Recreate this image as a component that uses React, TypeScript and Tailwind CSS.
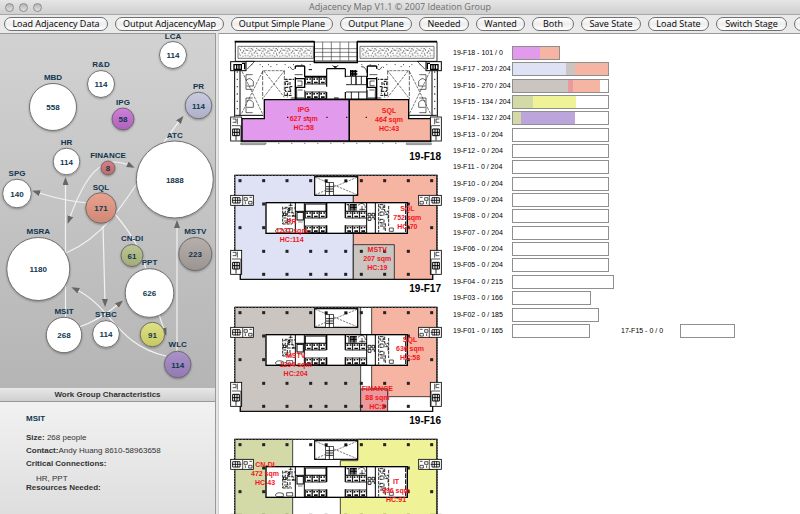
import React from "react";

type GroupNode = { name: string; size: number; x: number; y: number; r: number; labelY?: number; fill?: string };
type Room = { points: string; fill: string; lines: string[]; x: number; y: number };
type Floor = { name: string; rooms: Room[] };
type Bar = { label: string; width: number; parts?: [string, number][] };

const MAGENTA = "#e19aec";
const SALMON = "#f6b5a2";
const LAVENDER = "#dfe1f4";
const STONE = "#cbc5c1";
const GREEN = "#d3daa8";
const YELLOW = "#f0f297";
const PURPLE = "#bca5da";
const ROSE = "#ea9a9c";

const actions: [string, string][] = [
  ["Load Adjacency Data", "w-[104px]"],
  ["Output AdjacencyMap", "w-[109px]"],
  ["Output Simple Plane", "w-[102px]"],
  ["Output Plane", "w-[72px]"],
  ["Needed", "w-[50px]"],
  ["Wanted", "w-[49px]"],
  ["Both", "w-[42px]"],
  ["Save State", "w-[60px]"],
  ["Load State", "w-[61px]"],
  ["Switch Stage", "w-[71px]"],
];

const nodes: GroupNode[] = [
  { name: "LCA", size: 114, x: 173, y: 55, r: 13.5, labelY: 36 },
  { name: "R&D", size: 114, x: 101, y: 84, r: 13.5, labelY: 64 },
  { name: "MBD", size: 558, x: 53, y: 107, r: 23.5, labelY: 77 },
  { name: "IPG", size: 58, x: 123, y: 119, r: 11, labelY: 102, fill: "url(#n-magenta)" },
  { name: "PR", size: 114, x: 198.5, y: 105.5, r: 13.3, labelY: 86, fill: "url(#n-lavender)" },
  { name: "ATC", size: 1888, x: 174.8, y: 179.5, r: 38.5, labelY: 135 },
  { name: "HR", size: 114, x: 66.5, y: 161.5, r: 13.3, labelY: 142 },
  { name: "FINANCE", size: 8, x: 108, y: 168, r: 7, labelY: 155, fill: "url(#n-red)" },
  { name: "SPG", size: 140, x: 17, y: 193.5, r: 14.3, labelY: 173 },
  { name: "SQL", size: 171, x: 101, y: 208, r: 15.3, labelY: 187, fill: "url(#n-salmon)" },
  { name: "MSRA", size: 1180, x: 38.3, y: 269, r: 31.5, labelY: 231 },
  { name: "CN-DI", size: 61, x: 132, y: 255.5, r: 11, labelY: 238, fill: "url(#n-green)" },
  { name: "MSTV", size: 223, x: 195.3, y: 254, r: 16.5, labelY: 231, fill: "url(#n-stone)" },
  { name: "PPT", size: 626, x: 149.5, y: 293, r: 24.3, labelY: 262 },
  { name: "MSIT", size: 268, x: 64, y: 335, r: 17.7, labelY: 311 },
  { name: "STBC", size: 114, x: 106, y: 334, r: 13.4, labelY: 314 },
  { name: "IT", size: 91, x: 152.4, y: 334.5, r: 12.2, fill: "url(#n-yellow)" },
  { name: "WLC", size: 114, x: 177.7, y: 364.5, r: 13.3, labelY: 344, fill: "url(#n-purple)" },
];

const links = [
  "M88 203Q64 201 36 192",
  "M65.5 318V181",
  "M104 165Q86 172 69 220",
  "M104 163Q118 160 131 166",
  "M66 253C120 230 140 170 181 119",
  "M103 226L105 303",
  "M115 214C152 258 142 270 165 332",
  "M166 356C116 345 112 306 75 289",
  "M79 327Q98 321 120 303",
  "M177 352V224",
];

const gradients: [string, string, string][] = [
  ["n-magenta", "#d17fdc", "#ad62b8"],
  ["n-lavender", "#c9cbe0", "#adafc8"],
  ["n-red", "#d87f80", "#c06b6b"],
  ["n-salmon", "#e8a28f", "#cf8875"],
  ["n-green", "#bcc594", "#a2ac77"],
  ["n-stone", "#b7afab", "#9b9490"],
  ["n-yellow", "#dfe183", "#c6c863"],
  ["n-purple", "#ab92cb", "#9279b2"],
];

function AdjacencyGraph() {
  return (
    <svg
      width="215"
      height="354"
      viewBox="0 34 215 354"
      className="block shrink-0 text-[8px] font-bold"
      role="img"
      aria-label="Adjacency map"
    >
      <defs>
        <marker id="arrow" viewBox="0 0 8 6" refX="4" refY="3" markerWidth="8" markerHeight="6" markerUnits="userSpaceOnUse" orient="auto">
          <path d="M0 0L8 3L0 6Z" fill="#666" />
        </marker>
        <filter id="shade" x="-20%" y="-20%" width="140%" height="150%">
          <feDropShadow dx="0" dy="1" stdDeviation="1" floodColor="#000" floodOpacity="0.3" />
        </filter>
        {gradients.map(([id, a, b]) => (
          <linearGradient key={id} id={id} x1="0" y1="0" x2="0" y2="1">
            <stop offset="0" stopColor={a} />
            <stop offset="1" stopColor={b} />
          </linearGradient>
        ))}
      </defs>
      <g fill="none" stroke="#f2f2f2" strokeWidth="1.2">
        {links.map((d) => (
          <path key={d} d={d} markerEnd="url(#arrow)" />
        ))}
      </g>
      {nodes.map((n) => (
        <g key={n.name} textAnchor="middle" fill="#10364f">
          <circle cx={n.x} cy={n.y} r={n.r} fill={n.fill ?? "#fff"} stroke="#666" strokeWidth="0.9" filter="url(#shade)" />
          <text x={n.x} y={n.y + 3}>{n.size}</text>
          {n.labelY && <text x={n.x} y={n.labelY + 3}>{n.name}</text>}
        </g>
      ))}
    </svg>
  );
}

function Lifts({ x, y }: { x: number; y: number }) {
  return (
    <g>
      {[0, 21, 42].map((dx) => (
        <g key={dx} transform={`translate(${x + dx} ${y})`}>
          <rect width="20" height="20" fill="#fff" stroke="#000" strokeWidth="2.5" />
          <path d="M3 3h5v5h-5zM12 3h5v4h-5zM5 13h11v5h-11z" fill="#111" />
        </g>
      ))}
    </g>
  );
}

// Toilets and risers on both sides of the lift banks.
function Services() {
  return (
    <g fill="none" stroke="#000">
      <path d="M182 122v52M188 124h14v12h-14M206 112v14h14M196 140h18v10h-18zM184 156h12v14h-12M204 156v16M182 174h28" strokeWidth="2.5" strokeDasharray="9 3" />
      <path d="M184 128h10M190 144l8 8M210 128v14M186 165h14M200 118h12M160 195c4-8 14-8 24-4v9h-20zM194 188h18v10h-18z" strokeWidth="2" />
      <path d="M210 150h12M184 141h8v8h-8zM198 128h6v5h-6z" strokeWidth="3" />
      <path d="M220 110v92M247 110v92M220 136h27" strokeWidth="3" />
      <rect x="225" y="139" width="19" height="23" strokeWidth="3" />
      <path d="M228 168h14" strokeWidth="1.5" />
      <path d="M250 114h62v22h-62z" strokeWidth="3" />
      <path d="M314 110v46M314 178v24M370 110v46M370 178v24" strokeWidth="4" />
      <path d="M370 136h64M434 110v92M460 110v92" strokeWidth="3" />
      <path d="M374 116h7v18M386 114v20M390 114v20M394 114v20M398 114v20M402 114v20M384 116h20M384 124h20" strokeWidth="3" />
      <path d="M408 118c10-10 22-6 22 8M412 130h18M420 120v14" strokeWidth="2" />
      <path d="M438 142h9v8h-9zM450 142h8v8h-8zM438 154h9v9h-9zM450 155h7v7" strokeWidth="2.5" />
      <path d="M470 114v86M474 116h10v10h-10zM488 116v20h10M474 138h12v10h-12zM490 146h8v12M474 160h12v10h-12zM474 180h12v12M490 172v24M500 120v60" strokeWidth="2.5" strokeDasharray="10 3" />
      <path d="M502 186h12v10h-12zM478 130h8M490 138l6 6M476 174h14" strokeWidth="2" />
    </g>
  );
}

function Core() {
  return (
    <g>
      <rect x="132" y="110" width="424" height="92" fill="#fff" stroke="#000" strokeWidth="4" />
      <Services />
      <Lifts x={250} y={136} />
      <Lifts x={250} y={180} />
      <Lifts x={371} y={136} />
      <Lifts x={371} y={180} />
      <path d="M551 112v88" stroke="#000" strokeWidth="3" strokeDasharray="14 4" />
    </g>
  );
}

function SideStairs({ y }: { y: number }) {
  return (
    <g fill="none" stroke="#000">
      {[0, 1].map((side) => (
        <g key={side} transform={side ? `translate(684 ${y}) scale(-1 1)` : `translate(0 ${y})`}>
          <rect x="26" y="0" width="33" height="72" fill="#fff" strokeWidth="2.5" />
          <path d="M32 6h10v10h-10M46 4v18M30 26h26" strokeWidth="2" />
          <path d="M32 36h20v20h-20zM38 36v20M45 36v20M32 46h20" strokeWidth="3" />
          <path d="M42 56v14M57 26v46" strokeWidth="2.5" />
        </g>
      ))}
    </g>
  );
}

const columnRows: [number, number[]][] = [
  [44, [54, 125, 195, 266, 312, 371, 418, 488, 559, 629]],
  [114, [125, 195, 266, 418, 488, 559, 629]],
  [185, [54, 125, 559, 629]],
  [256, [125, 195, 266, 312, 371, 418, 488, 559]],
  [325, [125, 195, 266, 312, 371, 418, 488, 559]],
];

function TypicalFloor({ rooms }: { rooms: Room[] }) {
  return (
    <g>
      <path d="M38 28H645V255H630V341H55V255H38Z" fill="#fff" />
      {rooms.map((room) => (
        <polygon key={room.lines[0]} points={room.points} fill={room.fill} stroke="#222" strokeWidth="2.5" />
      ))}
      <path d="M38 28H645V255M38 28V255M55 322V340H632V322" fill="none" stroke="#111" strokeWidth="4" />
      <path d="M38 27H645" stroke="#999" strokeWidth="3" strokeDasharray="5 5" />
      <path d="M38 32V250M646 32V250" stroke="#888" strokeWidth="3" strokeDasharray="4 4" />
      {columnRows.map(([y, xs]) =>
        xs.map((x) => <rect key={`${x}-${y}`} x={x - 4.5} y={y - 4.5} width="9" height="9" fill="#222" />),
      )}
      <g fill="none" stroke="#000">
        <rect x="278" y="32" width="129" height="56" fill="#fff" strokeWidth="3.5" />
        <path d="M280 34L405 86M405 34L280 86" strokeWidth="1.5" strokeDasharray="7 3" />
        <rect x="310" y="50" width="25" height="38" fill="#fff" strokeWidth="2" />
        <path d="M322 50v38M312 62h22M312 69h22M312 76h22" strokeWidth="2.5" />
      </g>
      <g fill="#111">
        <rect x="308" y="40" width="9" height="9" />
        <rect x="367" y="40" width="9" height="9" />
      </g>
      {[0, 1].map((side) => (
        <g key={side} transform={side ? "translate(684 0) scale(-1 1)" : undefined} fill="none" stroke="#000">
          <rect x="26" y="88" width="68" height="30" fill="#fff" strokeWidth="2.5" />
          <path d="M32 95h22v16h-22zM40 94v18M47 94v18M30 103h28" strokeWidth="2.5" />
          <path d="M62 90v28M66 95h10v8h-10zM82 94h8M70 106v8M80 106h10v8h-10z" strokeWidth="2" />
        </g>
      ))}
      <SideStairs y={253} />
      <Core />
    </g>
  );
}

function TopFloor({ rooms }: { rooms: Room[] }) {
  return (
    <g>
      <defs>
        <pattern id="gravel" width="37" height="31" patternUnits="userSpaceOnUse">
          <path
            d="M2 3h3M9 6h3M16 2h3M24 5h3M32 3h3M5 11h3M13 13h3M20 10h3M29 12h3M1 18h3M10 20h3M17 17h3M26 20h3M33 17h3M6 26h3M14 28h3M22 25h3M30 27h3"
            stroke="#222"
            strokeWidth="3"
          />
        </pattern>
      </defs>
      <g fill="none" stroke="#000">
        <path d="M277 82H40V23H277ZM405 82H645V23H405Z" fill="#fff" strokeWidth="2.5" />
        <path d="M38 23H277M405 23H645" strokeWidth="5" />
        <path d="M48 37H274V73H48ZM414 37H636V73H414Z" strokeWidth="2" stroke="#333" />
        <path d="M52 41H270V70H52ZM418 41H632V70H418Z" fill="url(#gravel)" stroke="none" />
        <path d="M277 24H405M277 44H405M277 55H405M277 68H405M277 80H405M302 24V80M328 24V80M354 24V80M380 24V80" stroke="#333" strokeWidth="1.8" />
        <path d="M275 85H408" strokeWidth="5" />
        <path d="M277 22V84M406 22V84" strokeWidth="3.5" />
        {[0, 1].map((side) => (
          <g key={side} transform={side ? "translate(684 0) scale(-1 1)" : undefined}>
            <rect x="26" y="83" width="46" height="27" fill="#fff" strokeWidth="3" />
            <path d="M36 92h22v14h-22zM44 90v16M51 90v16M60 88h8v18" strokeWidth="4" />
            <path d="M72 82H98L75 106" strokeWidth="2" />
            <path d="M38 110V248M54 110V244M40 244H124" strokeWidth="3" />
            <path d="M46 112V245" strokeWidth="4" stroke="#555" strokeDasharray="4 18" />
            <path d="M60 112L122 240M122 112L58 240M125 110L187 110L125 190M125 110L187 190" stroke="#222" strokeWidth="1.8" strokeDasharray="9 3" />
            <path d="M122 110V196M187 110V190" strokeWidth="1.8" strokeDasharray="12 4" />
            <path d="M92 122H72V166H92M92 192H72V236H92" strokeWidth="1.8" />
            <path d="M74 138q10-10 20 4v14h-20M74 202q10-10 20 4v14h-20" strokeWidth="1.8" />
            <path d="M88 92h180M120 98h40M198 100h20" strokeWidth="3" stroke="#444" strokeDasharray="3 22" />
            <path d="M188 136h28M190 142h8v10h-8zM204 144v14h10M190 160h14v12h-14zM206 166v14M188 184h24M196 176v14" strokeWidth="3" strokeDasharray="9 3" />
            <path d="M220 96v8M220 130v66M220 96h28M248 96v34M220 134h28v26h-28z" strokeWidth="4" />
            <path d="M226 141h14v14h-14M228 168h14M248 168v28M218 122h24M204 98q8 14 14 6" strokeWidth="2" />
            <path d="M224 160v36M206 192h40" strokeWidth="2.5" />
          </g>
        ))}
        <path d="M314 104V158M314 174V194M370 104V130M370 174V194M314 104H370" strokeWidth="3.5" />
        <path d="M332 94l8 8l8-8M336 98h8M336 192h14M260 107h10" strokeWidth="3" />
        <path d="M370 127H434V152H402V127V152H372M388 127V150M418 127V150M372 174H434M388 174V196M410 174V196" strokeWidth="2.5" />
        <path d="M384 112h22M386 108v18M391 108v18M396 108v18M401 108v18M384 120h22" strokeWidth="4" />
        <path d="M418 98c10 0 16 8 16 18M434 127v68" strokeWidth="2.5" />
        <path d="M248 127H314M220 195H462" strokeWidth="3.5" />
      </g>
      <Lifts x={250} y={130} />
      <Lifts x={250} y={174} />
      {rooms.map((room) => (
        <polygon key={room.lines[0]} points={room.points} fill={room.fill} stroke="#000" strokeWidth="4" />
      ))}
      <path d="M195 250H500" stroke="#222" strokeWidth="4" strokeDasharray="4 55" />
      <SideStairs y={249} />
      <path d="M56 323H628" stroke="#111" strokeWidth="3" />
      <path d="M130 328H553" stroke="#555" strokeWidth="3" strokeDasharray="3 36" />
      <path d="M56 327H130V332H56ZM553 327H628V332H553Z" fill="#bbb" stroke="#555" strokeWidth="1.5" />
    </g>
  );
}

const floors: Floor[] = [
  {
    name: "19-F18",
    rooms: [
      { points: "127,197 382,197 382,321 60,321 60,254 127,254", fill: MAGENTA, lines: ["IPG", "627 sqm", "HC:58"], x: 245, y: 226 },
      { points: "382,197 560,197 560,254 626,254 626,321 382,321", fill: SALMON, lines: ["SQL", "464 sqm", "HC:43"], x: 501, y: 228 },
    ],
  },
  {
    name: "19-F17",
    rooms: [
      { points: "38,28 394,28 394,341 55,341 55,255 38,255", fill: LAVENDER, lines: ["PR", "1221 sqm", "HC:114"], x: 209, y: 167 },
      { points: "394,28 645,28 645,255 632,255 632,341 394,341", fill: SALMON, lines: ["SQL", "752 sqm", "HC:70"], x: 556, y: 128 },
      { points: "394,236 517,236 517,341 394,341", fill: STONE, lines: ["MSTV", "207 sqm", "HC:19"], x: 466, y: 249 },
    ],
  },
  {
    name: "19-F16",
    rooms: [
      { points: "38,28 416,28 416,341 55,341 55,255 38,255", fill: STONE, lines: ["MSTV", "1294 sqm", "HC:204"], x: 221, y: 171 },
      { points: "449,28 645,28 645,296 497,296 497,273 449,273", fill: SALMON, lines: ["SQL", "636 sqm", "HC:58"], x: 564, y: 123 },
      { points: "416,273 497,273 497,341 416,341", fill: ROSE, lines: ["FINANCE", "88 sqm", "HC:8"], x: 466, y: 270 },
    ],
  },
  {
    name: "19-F15",
    rooms: [
      { points: "38,28 212,28 212,341 55,341 55,255 38,255", fill: GREEN, lines: ["CN-DI", "472 sqm", "HC:43"], x: 129, y: 103 },
      { points: "407,28 645,28 645,255 632,255 632,341 355,341 355,92 407,92", fill: YELLOW, lines: ["IT", "996 sqm", "HC:91"], x: 522, y: 155 },
    ],
  },
];

function FloorPlan({ floor, top }: { floor: Floor; top: boolean }) {
  return (
    <figure className="shrink-0">
      <svg width="228" height="114" viewBox="0 0 684 342" className="block" role="img" aria-label={`Plan of ${floor.name}`}>
        {top ? <TopFloor rooms={floor.rooms} /> : <TypicalFloor rooms={floor.rooms} />}
        <g className="text-[21px] font-bold" fill="#f5141c" textAnchor="middle">
          {floor.rooms.map((room) =>
            room.lines.map((line, i) => (
              <text key={line} x={room.x} y={room.y + 8 + i * 27}>{line}</text>
            )),
          )}
        </g>
      </svg>
      <figcaption className="pr-[9px] text-right text-[10px] leading-[18px] font-bold text-black">{floor.name}</figcaption>
    </figure>
  );
}

const bars: Bar[] = [
  { label: "19-F18 - 101 / 0", width: 48, parts: [[MAGENTA, 27], [SALMON, 19]] },
  { label: "19-F17 - 203 / 204", width: 97, parts: [[LAVENDER, 53], [STONE, 9], [SALMON, 33]] },
  { label: "19-F16 - 270 / 204", width: 97, parts: [[STONE, 55], [ROSE, 5], [SALMON, 27]] },
  { label: "19-F15 - 134 / 204", width: 97, parts: [[GREEN, 20], [YELLOW, 43]] },
  { label: "19-F14 - 132 / 204", width: 97, parts: [[GREEN, 8], [PURPLE, 54]] },
  ...["13", "12", "11", "10", "09", "08", "07", "06", "05"].map((n) => ({ label: `19-F${n} - 0 / 204`, width: 97 })),
  { label: "19-F04 - 0 / 215", width: 102 },
  { label: "19-F03 - 0 / 166", width: 79 },
  { label: "19-F02 - 0 / 185", width: 87 },
  { label: "19-F01 - 0 / 165", width: 78 },
];

function CapacityBar({ bar }: { bar: Bar }) {
  return (
    <li className="flex items-center">
      <span className="w-[59px] shrink-0 text-[7px] leading-[14px] whitespace-nowrap text-black">{bar.label}</span>
      <span className="flex h-[14px] shrink-0 border border-[#8f8f8f] bg-white" style={{ width: bar.width }}>
        {bar.parts?.map(([color, width], i) => (
          <span key={i} className="h-full shrink-0" style={{ width, backgroundColor: color }} />
        ))}
      </span>
    </li>
  );
}

export default function App() {
  return (
    <div className="flex h-screen flex-col overflow-hidden bg-[#e6e6e6] font-['Liberation_Sans',Arial,sans-serif]">
      <header className="relative flex h-[15px] shrink-0 items-center justify-center border-b border-[#a8a8a8] bg-linear-to-b from-[#e6e6e6] to-[#cfcfcf]">
        <div className="absolute left-[5px] flex gap-[5px]">
          {["Close", "Minimise", "Zoom"].map((label) => (
            <button
              key={label}
              aria-label={label}
              className="size-[9px] rounded-full border border-[#8d8d8d] bg-linear-to-b from-[#b5b5b5] to-[#e2e2e2]"
            />
          ))}
        </div>
        <h1 className="font-['Open_Sans','Noto_Sans',sans-serif] text-[9px] leading-[14px] text-[#6e6e6e]">
          Adjacency Map V1.1 © 2007 Ideation Group
        </h1>
      </header>

      <nav className="flex h-[18px] shrink-0 items-center gap-[7px] overflow-hidden bg-[#e9e9e9] pl-1">
        {actions.map(([label, width]) => (
          <button
            key={label}
            className={`${width} flex h-[14px] shrink-0 items-center justify-center rounded-full border border-[#707070] bg-linear-to-b from-white via-[#ededed] to-white font-['Open_Sans','Noto_Sans',sans-serif] text-[9px] leading-[12px] font-medium whitespace-nowrap text-black`}
          >
            {label}
          </button>
        ))}
        <button
          aria-label="More"
          className="h-[14px] w-[60px] shrink-0 rounded-full border border-[#707070] bg-linear-to-b from-white via-[#ededed] to-white"
        />
      </nav>

      <div className="flex min-h-0 flex-1">
        <aside className="flex w-[216px] shrink-0 flex-col border-t border-r border-[#999]">
          <div className="min-h-0 flex-1 overflow-hidden bg-linear-to-b from-[#d2d2d2] to-[#b5b5b5]">
            <AdjacencyGraph />
          </div>
          <section className="flex h-[126px] shrink-0 flex-col bg-linear-to-b from-[#f4f4f4] to-[#dedede] text-[8px] text-[#333]">
            <h2 className="shrink-0 border-b border-[#999] bg-linear-to-b from-[#e8e8e8] to-[#cfcfcf] text-center leading-[13px] font-bold">
              Work Group Characteristics
            </h2>
            <div className="px-[26px] pt-[10px] leading-[13px]">
              <h3 className="mb-[6px] font-bold text-[#10364f]">MSIT</h3>
              <p><b>Size:</b> 268 people</p>
              <p><b>Contact:</b>Andy Huang 8610-58963658</p>
              <p><b>Critical Connections:</b></p>
              <p className="mt-1 pl-[10px] leading-[9px]">HR, PPT</p>
              <p className="leading-[9px]"><b>Resources Needed:</b></p>
            </div>
          </section>
        </aside>

        <main className="ml-[2px] flex min-w-0 flex-1 gap-[3px] overflow-hidden border-t border-l border-[#999] border-l-[#cfcfcf] bg-white pl-[3px]">
          <div className="flex w-[228px] shrink-0 flex-col">
            {floors.map((floor, i) => (
              <FloorPlan key={floor.name} floor={floor} top={i === 0} />
            ))}
          </div>
          <div className="flex h-[304px] shrink-0 pt-3">
            <ul className="flex w-[168px] flex-col justify-between">
              {bars.map((bar) => (
                <CapacityBar key={bar.label} bar={bar} />
              ))}
            </ul>
            <ul className="flex flex-col justify-end">
              <CapacityBar bar={{ label: "17-F15 - 0 / 0", width: 55 }} />
            </ul>
          </div>
        </main>
      </div>
    </div>
  );
}
